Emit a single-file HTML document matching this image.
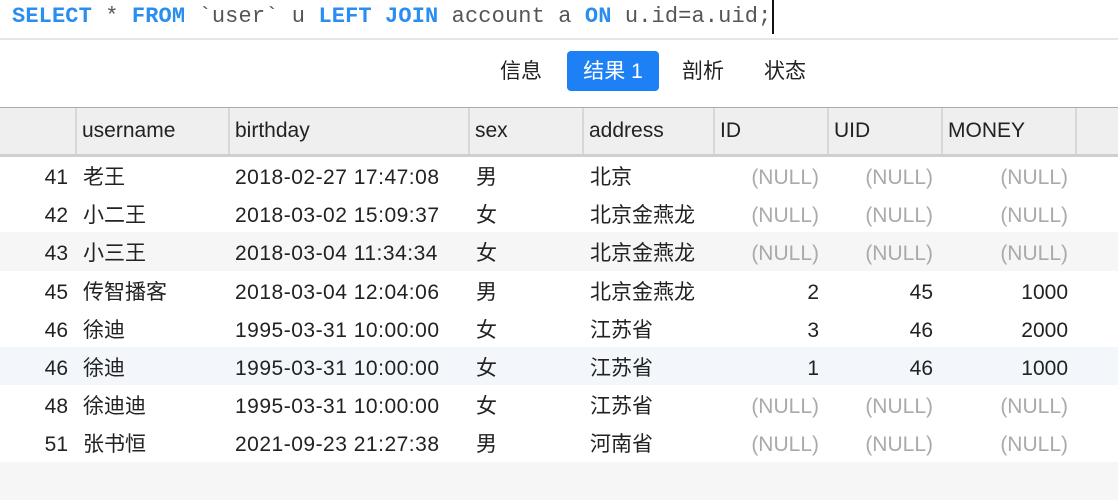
<!DOCTYPE html>
<html><head><meta charset="utf-8"><style>
body{margin:0;width:1118px;height:472px;background:#fff;overflow:hidden;position:relative;font-family:"Liberation Sans","Noto Sans CJK SC",sans-serif;color:#222}
.sql{position:absolute;left:12px;top:1px;font-family:"Liberation Mono",monospace;font-size:22px;letter-spacing:0.12px;color:#555;white-space:pre;line-height:32px}
.sql b{color:#2a8ef0}
.cur{position:absolute;left:772px;top:0;width:2px;height:34px;background:#111}
.sep{position:absolute;left:0;top:38px;width:1118px;height:2px;background:#e6e6e6}
.tab{position:absolute;top:51px;height:40px;line-height:42px;font-size:21px;color:#222}
.tab.on{background:#1e80f5;color:#fff;border-radius:4px;width:92px;text-align:center}
.hdr{position:absolute;left:0;top:107px;width:1118px;height:46px;background:#efefef;border-top:1px solid #aaa;border-bottom:3px solid #cfcfcf}
.hdr span{position:absolute;top:0;line-height:46px;font-size:21px;padding-left:5px;border-left:2px solid #d8d8d8;height:46px;box-sizing:border-box}
.row{position:absolute;left:0;width:1118px;height:38.2px;line-height:38.2px;font-size:21px}
.row span{position:absolute;top:3px;white-space:nowrap}
.r{text-align:right}
.n{color:#aaa}
</style></head><body>
<div class="sql"><b>SELECT</b> * <b>FROM</b> `user` u <b>LEFT JOIN</b> account a <b>ON</b> u.id=a.uid;</div>
<div class="cur"></div>
<div class="sep"></div>
<div class="tab" style="left:500px">信息</div>
<div class="tab on" style="left:567px">结果 1</div>
<div class="tab" style="left:682px">剖析</div>
<div class="tab" style="left:764px">状态</div>
<div class="hdr">
<span style="left:75px">username</span>
<span style="left:228px">birthday</span>
<span style="left:468px">sex</span>
<span style="left:582px">address</span>
<span style="left:713px">ID</span>
<span style="left:827px">UID</span>
<span style="left:941px">MONEY</span>
<span style="left:1075px;width:43px"></span>
</div>
<div id="rows"></div>
<script>
var d=[["41","老王","2018-02-27 17:47:08","男","北京",null,null,null,""],
["42","小二王","2018-03-02 15:09:37","女","北京金燕龙",null,null,null,""],
["43","小三王","2018-03-04 11:34:34","女","北京金燕龙",null,null,null,"#f6f6f6"],
["45","传智播客","2018-03-04 12:04:06","男","北京金燕龙","2","45","1000",""],
["46","徐迪","1995-03-31 10:00:00","女","江苏省","3","46","2000",""],
["46","徐迪","1995-03-31 10:00:00","女","江苏省","1","46","1000","#f3f7fc"],
["48","徐迪迪","1995-03-31 10:00:00","女","江苏省",null,null,null,""],
["51","张书恒","2021-09-23 21:27:38","男","河南省",null,null,null,""],
["","","","","","","","","#f6f6f6"]];
var h="";
d.forEach(function(r,i){
 function v(x,right){return x===null?'<span class="r n" style="right:'+right+'px">(NULL)</span>':'<span class="r" style="right:'+right+'px">'+x+'</span>';}
 h+='<div class="row" style="top:'+(156+i*38.2)+'px;background:'+(r[8]||'transparent')+'">'+
 '<span class="r" style="right:1050px">'+r[0]+'</span>'+
 '<span style="left:83px">'+r[1]+'</span>'+
 '<span style="left:235px;letter-spacing:0.5px">'+r[2]+'</span>'+
 '<span style="left:476px">'+r[3]+'</span>'+
 '<span style="left:590px">'+r[4]+'</span>'+
 (r[0]?v(r[5],299)+v(r[6],185)+v(r[7],50):'')+'</div>';
});
document.getElementById("rows").innerHTML=h;
</script>
</body></html>
